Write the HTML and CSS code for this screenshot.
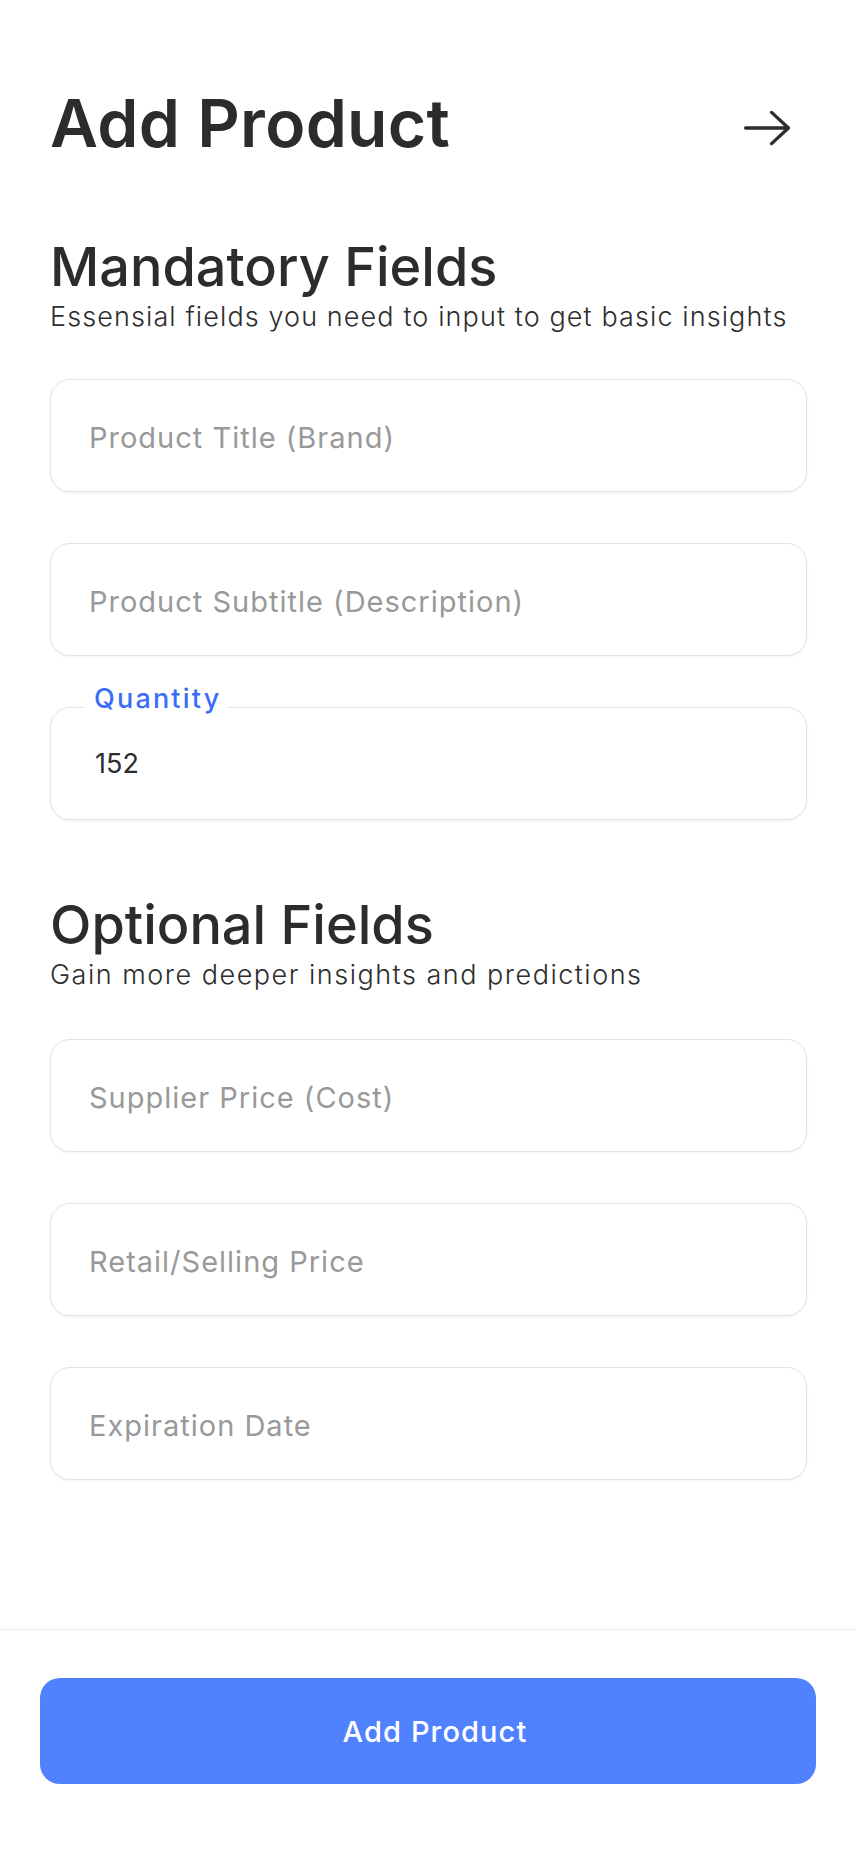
FILE: index.html
```html
<!DOCTYPE html>
<html lang="en">
<head>
<meta charset="utf-8">
<title>Add Product</title>
<link rel="stylesheet" href="styles.css">
</head>
<body>
<div class="screen">
  <header class="topbar">
    <h1 class="page-title">Add Product</h1>
    <button class="icon-btn" type="button" aria-label="Next">
      <svg width="48" height="48" viewBox="0 0 48 48" fill="none" stroke="#2d2d2d" stroke-width="3.3" stroke-linecap="round" stroke-linejoin="round">
        <path d="M3.6 24H46.4"/>
        <path d="M29.6 8.4L46.4 24L29.6 39.6"/>
      </svg>
    </button>
  </header>

  <main class="form">
    <section class="group">
      <h2 class="group-title">Mandatory Fields</h2>
      <p class="group-desc">Essensial fields you need to input to get basic insights</p>
      <div class="fields">
        <div class="field"><span class="placeholder">Product Title (Brand)</span></div>
        <div class="field"><span class="placeholder">Product Subtitle (Description)</span></div>
        <div class="field field--filled">
          <span class="field-label">Quantity</span>
          <span class="field-value">152</span>
        </div>
      </div>
    </section>

    <section class="group group--optional">
      <h2 class="group-title">Optional Fields</h2>
      <p class="group-desc group-desc--wide">Gain more deeper insights and predictions</p>
      <div class="fields">
        <div class="field"><span class="placeholder">Supplier Price (Cost)</span></div>
        <div class="field"><span class="placeholder">Retail/Selling Price</span></div>
        <div class="field"><span class="placeholder">Expiration Date</span></div>
      </div>
    </section>
  </main>

  <footer class="footer">
    <button class="primary-btn" type="button">Add Product</button>
  </footer>
</div>
</body>
</html>
```

FILE: styles.css
```css
* { box-sizing: border-box; }

html, body {
  margin: 0;
  padding: 0;
  background: #ffffff;
}

body {
  font-family: "Inter", "Liberation Sans", sans-serif;
  color: #2d2d2d;
}

.screen {
  width: 856px;
  min-height: 1852px;
  display: flex;
  flex-direction: column;
}

.topbar {
  display: flex;
  justify-content: space-between;
  align-items: flex-start;
  padding: 83px 66px 0 50px;
}

.page-title {
  margin: 0;
  font-size: 66px;
  line-height: 80px;
  font-weight: 600;
  letter-spacing: 0.3px;
  color: #2c2c2c;
}

.icon-btn {
  margin-top: 21px;
  padding: 0;
  border: 0;
  background: none;
  width: 48px;
  height: 48px;
  display: flex;
}

.form {
  padding: 0 49px 0 50px;
}

.group {
  margin-top: 71px;
}

.group--optional {
  margin-top: 72px;
}

.group-title {
  margin: 0;
  font-size: 54px;
  line-height: 66px;
  font-weight: 500;
  color: #2c2c2c;
}

.group-desc {
  margin: 1px 0 0;
  font-size: 27px;
  line-height: 32px;
  font-weight: 300;
  letter-spacing: 1.1px;
  color: #2d2d2d;
}

.group-desc--wide {
  letter-spacing: 1.5px;
}

.fields {
  margin-top: 46px;
  display: flex;
  flex-direction: column;
  gap: 51px;
}

.group--optional .fields {
  margin-top: 48px;
}

.field {
  position: relative;
  height: 113px;
  border: 1px solid #e4e4e4;
  border-radius: 20px;
  background: #ffffff;
  box-shadow: 0 1px 3px rgba(0, 0, 0, 0.06);
  display: flex;
  align-items: center;
  padding: 4px 38px 0;
}

.placeholder {
  font-size: 29px;
  line-height: 34px;
  letter-spacing: 1px;
  color: #999999;
}

.field--filled {
  padding-top: 0;
}

.field-value {
  font-size: 27px;
  line-height: 32px;
  color: #2d2d2d;
  padding-left: 6px;
}

.field-label {
  position: absolute;
  left: 34px;
  top: -25px;
  padding: 0 7px 0 9px;
  background: #ffffff;
  font-size: 27px;
  line-height: 32px;
  font-weight: 500;
  letter-spacing: 2.2px;
  color: #3b6ef5;
}

.footer {
  margin-top: auto;
  border-top: 1px solid #ececec;
  box-shadow: 0 -2px 4px rgba(0, 0, 0, 0.03);
  padding: 48px 40px 68px;
}

.primary-btn {
  width: 100%;
  height: 106px;
  border: 0;
  border-radius: 20px;
  background: #5082ff;
  color: #ffffff;
  font-family: "Inter", "Liberation Sans", sans-serif;
  font-size: 29px;
  font-weight: 500;
  letter-spacing: 1.1px;
  display: flex;
  align-items: center;
  justify-content: center;
  padding: 0 0 0 14px;
}
```
